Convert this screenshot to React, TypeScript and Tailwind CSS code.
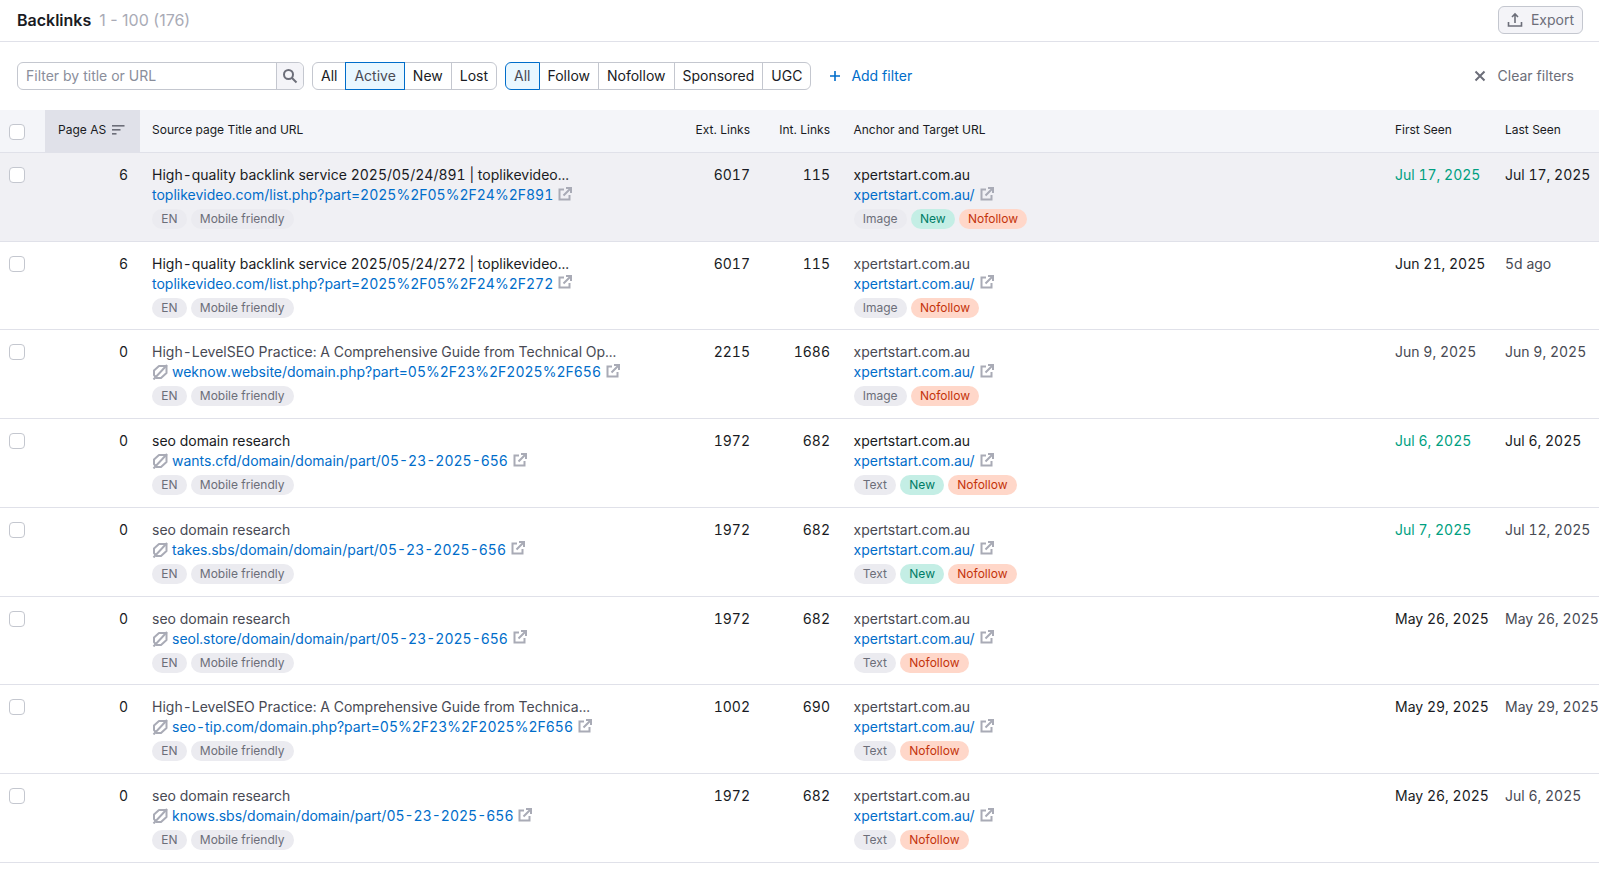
const GRID = "grid grid-cols-[45px_95px_530px_92px_80px_541px_110px_106px]";
const DARK = "text-[#191b23]";
const GRAY = "text-[#484a54]";
const GREEN = "text-[#009f81]";

function ExternalIcon() {
  return (
    <svg width="14" height="14" viewBox="0 0 14 14" fill="none" stroke="#a9abb6" strokeWidth="2" className="ml-[5px] -mt-[3px] shrink-0">
      <path d="M6 2.5H1.5v10h10V8" />
      <path d="M5.5 8.5 12.5 1.5M8 1h5v5" />
    </svg>
  );
}

function NofollowIcon() {
  return (
    <svg width="16" height="16" viewBox="0 0 16 16" fill="none" stroke="#a9abb6" strokeWidth="2" className="mr-1 shrink-0">
      <path d="M14.5 2H7L2 6.5v4.5L4.5 14H9l5.5-5z" strokeLinejoin="round" />
      <path d="M1.5 15.5 15 1" />
    </svg>
  );
}

function SortIcon() {
  return (
    <svg width="13" height="12" viewBox="0 0 13 12" fill="#6c6e79" className="ml-[6px]">
      <rect x="0" y="1" width="12.5" height="1.6" />
      <rect x="0" y="5" width="8.5" height="1.6" />
      <rect x="0" y="9" width="4.5" height="1.6" />
    </svg>
  );
}

function Pill({ kind, children }: { kind: "gray" | "new" | "nofollow"; children: string }) {
  const cls =
    kind === "new" ? "bg-[#c4eee5] text-[#007c65]"
    : kind === "nofollow" ? "bg-[#ffd7c9] text-[#c4330b]"
    : "bg-[#ebebf0] text-[#6c6e79]";
  return <span className={`inline-flex h-5 items-center rounded-full px-[9.2px] text-xs ${cls}`}>{children}</span>;
}

function Segment({ items, active }: { items: string[]; active: string }) {
  return (
    <div className="flex h-7 rounded-md">
      {items.map((item, i) => (
        <div
          key={item}
          className={[
            "flex items-center border px-2 text-sm",
            i > 0 ? "-ml-px" : "",
            i === 0 ? "rounded-l-md" : "",
            i === items.length - 1 ? "rounded-r-md" : "",
            item === active ? "relative z-10 border-[#006dca] bg-[#e9f7ff] text-[#484a54]" : "border-[#c4c7cf] text-[#191b23]",
          ].join(" ")}
        >
          {item}
        </div>
      ))}
    </div>
  );
}

interface Row {
  as: number;
  title: string;
  titleColor: string;
  url: string;
  nofollow?: boolean;
  ext: number;
  int: number;
  anchorColor: string;
  type: string;
  isNew?: boolean;
  first: string;
  firstColor: string;
  last: string;
  lastColor: string;
}

const ROWS: Row[] = [
  { as: 6, title: "High-quality backlink service 2025/05/24/891 | toplikevideo...", titleColor: DARK, url: "toplikevideo.com/list.php?part=2025%2F05%2F24%2F891", ext: 6017, int: 115, anchorColor: DARK, type: "Image", isNew: true, first: "Jul 17, 2025", firstColor: GREEN, last: "Jul 17, 2025", lastColor: DARK },
  { as: 6, title: "High-quality backlink service 2025/05/24/272 | toplikevideo...", titleColor: DARK, url: "toplikevideo.com/list.php?part=2025%2F05%2F24%2F272", ext: 6017, int: 115, anchorColor: GRAY, type: "Image", first: "Jun 21, 2025", firstColor: DARK, last: "5d ago", lastColor: GRAY },
  { as: 0, title: "High-LevelSEO Practice: A Comprehensive Guide from Technical Op...", titleColor: GRAY, url: "weknow.website/domain.php?part=05%2F23%2F2025%2F656", nofollow: true, ext: 2215, int: 1686, anchorColor: GRAY, type: "Image", first: "Jun 9, 2025", firstColor: GRAY, last: "Jun 9, 2025", lastColor: GRAY },
  { as: 0, title: "seo domain research", titleColor: DARK, url: "wants.cfd/domain/domain/part/05-23-2025-656", nofollow: true, ext: 1972, int: 682, anchorColor: DARK, type: "Text", isNew: true, first: "Jul 6, 2025", firstColor: GREEN, last: "Jul 6, 2025", lastColor: DARK },
  { as: 0, title: "seo domain research", titleColor: GRAY, url: "takes.sbs/domain/domain/part/05-23-2025-656", nofollow: true, ext: 1972, int: 682, anchorColor: GRAY, type: "Text", isNew: true, first: "Jul 7, 2025", firstColor: GREEN, last: "Jul 12, 2025", lastColor: GRAY },
  { as: 0, title: "seo domain research", titleColor: GRAY, url: "seol.store/domain/domain/part/05-23-2025-656", nofollow: true, ext: 1972, int: 682, anchorColor: GRAY, type: "Text", first: "May 26, 2025", firstColor: DARK, last: "May 26, 2025", lastColor: GRAY },
  { as: 0, title: "High-LevelSEO Practice: A Comprehensive Guide from Technica...", titleColor: GRAY, url: "seo-tip.com/domain.php?part=05%2F23%2F2025%2F656", nofollow: true, ext: 1002, int: 690, anchorColor: GRAY, type: "Text", first: "May 29, 2025", firstColor: DARK, last: "May 29, 2025", lastColor: GRAY },
  { as: 0, title: "seo domain research", titleColor: GRAY, url: "knows.sbs/domain/domain/part/05-23-2025-656", nofollow: true, ext: 1972, int: 682, anchorColor: GRAY, type: "Text", first: "May 26, 2025", firstColor: DARK, last: "Jul 6, 2025", lastColor: GRAY },
];

function Checkbox() {
  return <div className="h-4 w-4 rounded-[4px] border border-[#c4c7cf] bg-white" />;
}

function TableRow({ row, highlight }: { row: Row; highlight: boolean }) {
  return (
    <div className={`${GRID} h-[88.72px] border-b border-[#e0e1e9] pt-3 text-sm leading-5 tabular-nums ${highlight ? "bg-[#f0f0f4]" : "bg-white"}`}>
      <div className="pl-[9px] pt-[2px]"><Checkbox /></div>
      <div className={`pr-3 text-right ${DARK}`}>{row.as}</div>
      <div className="pl-3">
        <div className={`whitespace-nowrap ${row.titleColor}`}>{row.title}</div>
        <div className="flex items-center text-[#006dca]">
          {row.nofollow && <NofollowIcon />}
          <span className="whitespace-nowrap">{row.url}</span>
          <ExternalIcon />
        </div>
        <div className="mt-1 flex gap-1">
          <Pill kind="gray">EN</Pill>
          <Pill kind="gray">Mobile friendly</Pill>
        </div>
      </div>
      <div className={`pr-3 text-right ${DARK}`}>{row.ext}</div>
      <div className={`pr-3 text-right ${DARK}`}>{row.int}</div>
      <div className="pl-[11.5px]">
        <div className={row.anchorColor}>xpertstart.com.au</div>
        <div className="flex items-center text-[#006dca]">
          <span>xpertstart.com.au/</span>
          <ExternalIcon />
        </div>
        <div className="mt-1 flex gap-1">
          <Pill kind="gray">{row.type}</Pill>
          {row.isNew && <Pill kind="new">New</Pill>}
          <Pill kind="nofollow">Nofollow</Pill>
        </div>
      </div>
      <div className={`whitespace-nowrap pl-3 ${row.firstColor}`}>{row.first}</div>
      <div className={`whitespace-nowrap pl-3 ${row.lastColor}`}>{row.last}</div>
    </div>
  );
}

export default function App() {
  return (
    <div className="h-[869px] w-full overflow-hidden bg-white font-[Inter,sans-serif]">
      <div className="flex h-[42px] items-center justify-between border-b border-[#e0e1e9] pb-[2px] pl-[17px] pr-4">
        <div className="flex items-baseline gap-2">
          <span className="text-base font-semibold text-[#191b23]">Backlinks</span>
          <span className="text-base text-[#a9abb6]">1 - 100 (176)</span>
        </div>
        <button className="flex h-7 items-center gap-2 rounded-md border border-[#c4c7cf] bg-[#f4f4f8] px-2 text-sm text-[#6c6e79]">
          <svg width="16" height="16" viewBox="0 0 16 16" fill="none" stroke="#6c6e79" strokeWidth="1.6">
            <path d="M8 11V2.5M5 5l3-3 3 3M1.5 10v4h13v-4" />
          </svg>
          Export
        </button>
      </div>

      <div className="flex h-[68px] items-center pl-[17px] pr-4">
        <div className="mr-2 flex h-7 w-[287px] rounded-md border border-[#c4c7cf]">
          <div className="flex flex-1 items-center px-2 text-sm text-[#8a8e9b]">Filter by title or URL</div>
          <div className="flex w-[27px] items-center justify-center rounded-r-md border-l border-[#c4c7cf] bg-[#f4f4f8]">
            <svg width="16" height="16" viewBox="0 0 16 16" fill="none" stroke="#6c6e79" strokeWidth="2">
              <circle cx="6.5" cy="6.5" r="4.5" />
              <path d="M10 10l4.5 4.5" />
            </svg>
          </div>
        </div>
        <Segment items={["All", "Active", "New", "Lost"]} active="Active" />
        <div className="ml-2">
          <Segment items={["All", "Follow", "Nofollow", "Sponsored", "UGC"]} active="All" />
        </div>
        <div className="ml-[18px] flex items-center gap-[10px] text-sm text-[#006dca]">
          <svg width="12" height="12" viewBox="0 0 12 12" stroke="#006dca" strokeWidth="1.6"><path d="M6 1v10M1 6h10" /></svg>
          Add filter
        </div>
        <div className="ml-auto flex items-center gap-3 pr-[9px] text-sm text-[#6c6e79]">
          <svg width="12" height="12" viewBox="0 0 12 12" stroke="#6c6e79" strokeWidth="2"><path d="M1.5 1.5l9 9M10.5 1.5l-9 9" /></svg>
          Clear filters
        </div>
      </div>

      <div className={`${GRID} h-[43px] items-center border-b border-[#e0e1e9] bg-[#f4f5f9] text-xs text-[#191b23]`}>
        <div className="pl-[9px] pt-[1px]"><Checkbox /></div>
        <div className="flex h-full items-center bg-[#e0e1e9] pb-[3px] pl-[13px]">
          Page AS
          <SortIcon />
        </div>
        <div className="pb-[3px] pl-3">Source page Title and URL</div>
        <div className="pb-[3px] pr-3 text-right">Ext. Links</div>
        <div className="pb-[3px] pr-3 text-right">Int. Links</div>
        <div className="pb-[3px] pl-[11.5px]">Anchor and Target URL</div>
        <div className="pb-[3px] pl-3">First Seen</div>
        <div className="pb-[3px] pl-3">Last Seen</div>
      </div>

      {ROWS.map((row, i) => (
        <TableRow key={row.url} row={row} highlight={i === 0} />
      ))}
    </div>
  );
}
